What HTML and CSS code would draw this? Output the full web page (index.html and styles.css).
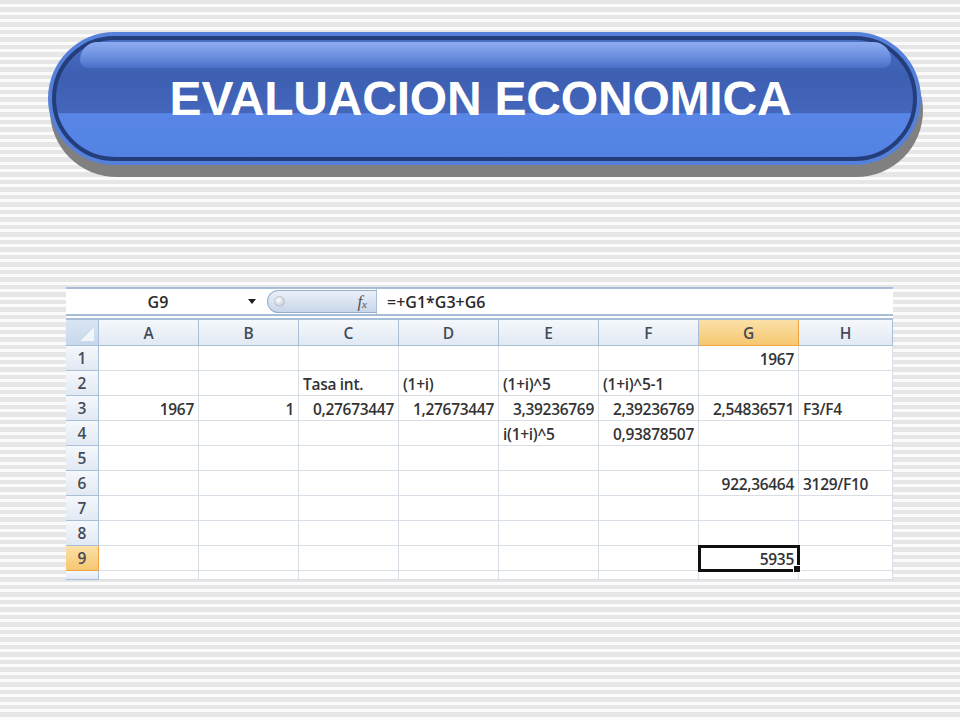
FILE: index.html
```html
<!DOCTYPE html>
<html lang="es">
<head>
    <meta charset="UTF-8">
    <title>Evaluacion Economica</title>
    <link rel="stylesheet" href="styles.css">
</head>
<body>
    <header class="banner">
        <div class="banner-inner">
            <h1>EVALUACION ECONOMICA</h1>
        </div>
    </header>

    <section class="sheet">
        <div class="fbar">
            <div class="namebox"><span class="name">G9</span><span class="arrow"></span></div>
            <div class="fx-area"><span class="knob"></span><span class="fx">f<sub>x</sub></span></div>
            <div class="formula">=+G1*G3+G6</div>
        </div>

        <div class="grid">
            <div class="h corner"><span class="tri"></span></div>
            <div class="h">A</div><div class="h">B</div><div class="h">C</div><div class="h">D</div>
            <div class="h">E</div><div class="h">F</div><div class="h hot">G</div><div class="h">H</div>

            <div class="h">1</div>
            <div class="c"></div><div class="c"></div><div class="c"></div><div class="c"></div>
            <div class="c"></div><div class="c"></div><div class="c r">1967</div><div class="c"></div>

            <div class="h">2</div>
            <div class="c"></div><div class="c"></div><div class="c">Tasa int.</div><div class="c">(1+i)</div>
            <div class="c">(1+i)^5</div><div class="c">(1+i)^5-1</div><div class="c"></div><div class="c"></div>

            <div class="h">3</div>
            <div class="c r">1967</div><div class="c r">1</div><div class="c r">0,27673447</div><div class="c r">1,27673447</div>
            <div class="c r">3,39236769</div><div class="c r">2,39236769</div><div class="c r">2,54836571</div><div class="c">F3/F4</div>

            <div class="h">4</div>
            <div class="c"></div><div class="c"></div><div class="c"></div><div class="c"></div>
            <div class="c">i(1+i)^5</div><div class="c r">0,93878507</div><div class="c"></div><div class="c"></div>

            <div class="h">5</div>
            <div class="c"></div><div class="c"></div><div class="c"></div><div class="c"></div>
            <div class="c"></div><div class="c"></div><div class="c"></div><div class="c"></div>

            <div class="h">6</div>
            <div class="c"></div><div class="c"></div><div class="c"></div><div class="c"></div>
            <div class="c"></div><div class="c"></div><div class="c r">922,36464</div><div class="c">3129/F10</div>

            <div class="h">7</div>
            <div class="c"></div><div class="c"></div><div class="c"></div><div class="c"></div>
            <div class="c"></div><div class="c"></div><div class="c"></div><div class="c"></div>

            <div class="h">8</div>
            <div class="c"></div><div class="c"></div><div class="c"></div><div class="c"></div>
            <div class="c"></div><div class="c"></div><div class="c"></div><div class="c"></div>

            <div class="h hot">9</div>
            <div class="c"></div><div class="c"></div><div class="c"></div><div class="c"></div>
            <div class="c"></div><div class="c"></div><div class="c r sel">5935</div><div class="c"></div>

            <div class="h cut">10</div>
            <div class="c"></div><div class="c"></div><div class="c"></div><div class="c"></div>
            <div class="c"></div><div class="c"></div><div class="c"></div><div class="c"></div>
        </div>
    </section>
</body>
</html>
```

FILE: styles.css
```css
body {
    margin: 0;
    font-family: "Open Sans", "Liberation Sans", sans-serif;
    background: repeating-linear-gradient(to bottom, #e6e6e6 0, #e6e6e6 4.5px, #fbfbfb 4.5px, #fbfbfb 7.5px);
    min-height: 720px;
}

/* title pill */
.banner {
    box-sizing: border-box;
    margin: 32px 39px 0 48px;
    height: 133px;
    padding: 4px;
    border-radius: 67px;
    background: #5681da;
    box-shadow: 2px 12px 0 #808080;
}
.banner-inner {
    position: relative;
    box-sizing: border-box;
    height: 100%;
    border: 4px solid #243d7b;
    border-radius: 63px;
    background: linear-gradient(to bottom, #4a6fc5 0%, #3d5fb2 30%, #4466bb 62%, #5a87e7 63%, #5282e2 100%);
    display: flex;
    align-items: center;
    justify-content: center;
    padding-right: 8px;
}
.banner-inner::before {
    content: "";
    position: absolute;
    left: 24px;
    right: 22px;
    top: 2px;
    height: 26px;
    border-radius: 30px 30px 14px 14px;
    background: linear-gradient(to bottom, #8eacf0, #6b8fdf 55%, #4b6fc6);
}
.banner h1 {
    position: relative;
    margin: 0;
    color: #fff;
    font: bold 48px "Liberation Sans", Arial, sans-serif;
    letter-spacing: -0.2px;
}

/* spreadsheet */
.sheet {
    margin: 122px 0 0 66px;
    width: 827px;
    background: #fff;
}
.fbar {
    box-sizing: border-box;
    height: 29px;
    display: flex;
    border-top: 2px solid #a8bdd8;
    border-bottom: 2px solid #a8bdd8;
    font-size: 16px;
    font-weight: 600;
    color: #2a2a2a;
}
.namebox {
    width: 197px;
    display: flex;
    align-items: center;
}
.name {
    flex: 1;
    text-align: center;
    padding-left: 2px;
}
.arrow {
    width: 0;
    height: 0;
    border-left: 4px solid transparent;
    border-right: 4px solid transparent;
    border-top: 5px solid #1e1e1e;
    margin-right: 7px;
}
.fx-area {
    box-sizing: border-box;
    width: 109px;
    margin: 1px 0 1px 4px;
    display: flex;
    align-items: center;
    justify-content: space-between;
    border: 1px solid #98adca;
    border-right: none;
    border-radius: 12px 0 0 12px;
    background: linear-gradient(to bottom, #eaf0f8, #c8d6ea);
}
.knob {
    width: 9px;
    height: 9px;
    margin-left: 6px;
    border-radius: 50%;
    background: radial-gradient(circle at 40% 35%, #fff, #b1bcc9);
    border: 1px solid #bcc6d2;
}
.fx {
    font: italic 17px "Liberation Serif", serif;
    color: #555;
    margin-right: 9px;
}
.fx sub {
    font-size: 11px;
    vertical-align: -1px;
}
.formula {
    flex: 1;
    display: flex;
    align-items: center;
    padding-left: 10px;
    border-left: 1px solid #a8bdd8;
}

.grid {
    margin-top: 2px;
    border-top: 2px solid #a8bdd8;
    display: grid;
    grid-template-columns: 33px repeat(7, 100px) 94px;
    grid-template-rows: 26px repeat(9, 25px) 9px;
    overflow: hidden;
    font-size: 15.5px;
    font-weight: 600;
    color: #333;
}
.c {
    box-sizing: border-box;
    display: flex;
    align-items: center;
    padding: 1px 4px 0 4px;
    border-right: 1px solid #d8dde6;
    border-bottom: 1px solid #d8dde6;
    white-space: nowrap;
    letter-spacing: -0.3px;
}
.c.r { justify-content: flex-end; }

.h {
    box-sizing: border-box;
    display: flex;
    align-items: center;
    justify-content: center;
    border-right: 1px solid #a9bfd7;
    border-bottom: 1px solid #a9bfd7;
    background: linear-gradient(to bottom, #f5f8fc, #e2e9f3);
    color: #444b57;
}
.h.hot {
    background: linear-gradient(to bottom, #fbe0a8, #f6c770);
    border-color: #f0a444;
}
.h.cut {
    align-items: flex-start;
    padding-top: 4px;
    overflow: hidden;
    font-size: 14px;
}
.corner {
    justify-content: flex-end;
    align-items: flex-end;
    padding: 0 4px 4px 0;
    background: linear-gradient(to bottom, #d9e5f3, #c7d7ec);
}
.tri {
    width: 13px;
    height: 13px;
    background: linear-gradient(135deg, transparent 50%, #f2f5f9 50%);
}

.sel {
    position: relative;
    outline: 3px solid #111;
    outline-offset: -2px;
}
.sel::after {
    content: "";
    position: absolute;
    right: -3px;
    bottom: -3px;
    width: 6px;
    height: 6px;
    background: #111;
    border: 1px solid #fff;
}
```
